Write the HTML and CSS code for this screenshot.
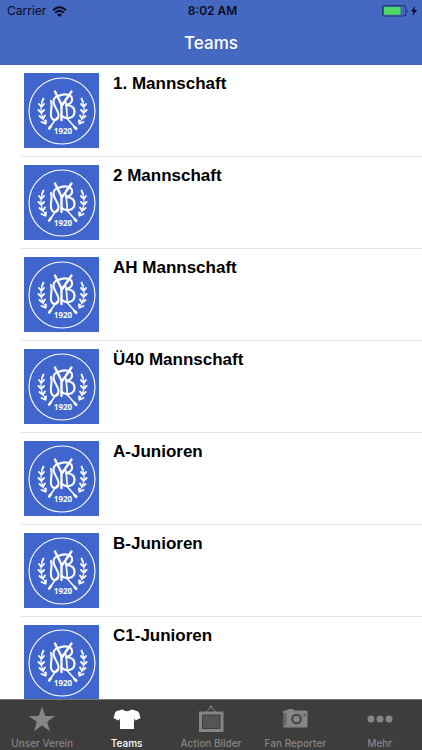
FILE: index.html
```html
<!DOCTYPE html>
<html lang="de">
<head>
<meta charset="utf-8">
<meta name="viewport" content="width=device-width, initial-scale=1">
<title>Teams</title>
<link rel="stylesheet" href="styles.css">
</head>
<body>
<div class="app">
  <header class="header">
    <div class="status">
      <div class="carrier">Carrier
        <svg width="15" height="11" viewBox="0 0 15 11" fill="none" stroke="#080b1c" aria-hidden="true">
          <path stroke-width="2" d="M1 4.200Q7.500-1.800 14 4.200M3.300 6.700Q7.500 2.800 11.700 6.700"/>
          <path fill="#080b1c" stroke="none" d="M5 8.400Q7.500 6.400 10 8.400L7.500 11Z"/>
        </svg>
      </div>
      <div class="time">8:02 AM</div>
      <div class="power">
        <svg width="36" height="12" viewBox="0 0 36 12" aria-hidden="true">
          <rect x=".7" y=".7" width="23" height="10.300" rx="2" fill="none" stroke="#25396f" stroke-width="1.200"/>
          <rect x="2" y="2" width="16.500" height="7.700" rx=".7" fill="#4cd964"/>
          <path d="M25 4q1.700 1.800 0 4z" fill="#25396f"/>
          <path d="M33 .8 29 6.400h2.500L30.500 11l4.500-6h-2.700z" fill="#080b1c"/>
        </svg>
      </div>
    </div>
    <h1 class="title">Teams</h1>
  </header>
  <main class="content">
    <ul class="teams">
      <li class="team">
        <svg class="crest" viewBox="0 0 75 75" aria-hidden="true">
          <g id="crest">
            <rect width="75" height="75" fill="#4065cd"/>
            <g fill="none" stroke="#fff" stroke-linecap="round" stroke-linejoin="round">
              <circle cx="38" cy="38" r="33" stroke-width="1.100"/>
              <path stroke-width="2.400" d="M31 18.500 37.500 31.500V47M47.500 18.500 37.500 33"/>
              <path stroke-width="1.500" d="M33 44.500 25.500 55M43 45.500 52 55.500"/>
              <path stroke-width="2.600" d="M27 53l-1.800 2.500M50.500 54l1.700 1.800"/>
              <path stroke-width="2" d="M27 28C29 33 26 38 27 43c1 5 7 5.500 7.500 0C35 37 29.500 34 29.500 28.500c0-3.500 3-5.500 7-6.200"/>
              <path stroke-width="2.100" d="M36.500 22.300c5-1.800 10.500-.8 11.500 3 .8 4-2.500 6-6 7 5-.3 9 2.200 8.500 7-.5 5.500-7.500 8-13 3.500"/>
              <path stroke-width="1.700" d="M42 29.500 43.500 46"/>
              <g id="branch">
                <path stroke-width="1.100" d="M19 26c-3.500 8-2.500 17 3 25"/>
                <path stroke-width="1.900" d="M19.500 25.500l-1.500 3.500M17 33.500l-2-2.500M17 39.500l-2.500-2.500M18.500 45.500l-3-2.500M21 50.500l-3.500-1.500M17.500 33.500l2.500-2.500M17.500 39.500l2.500-2.500M19 45.500l2-3M21.500 50.500l.5-3"/>
              </g>
              <use href="#branch" transform="translate(77 0) scale(-1 1)"/>
            </g>
            <text class="crest-year" x="39" y="61" text-anchor="middle">1920</text>
          </g>
        </svg>
        <h2 class="name">1. Mannschaft</h2>
      </li>
      <li class="team"><svg class="crest" viewBox="0 0 75 75" aria-hidden="true"><use href="#crest"/></svg><h2 class="name">2 Mannschaft</h2></li>
      <li class="team"><svg class="crest" viewBox="0 0 75 75" aria-hidden="true"><use href="#crest"/></svg><h2 class="name">AH Mannschaft</h2></li>
      <li class="team"><svg class="crest" viewBox="0 0 75 75" aria-hidden="true"><use href="#crest"/></svg><h2 class="name">Ü40 Mannschaft</h2></li>
      <li class="team"><svg class="crest" viewBox="0 0 75 75" aria-hidden="true"><use href="#crest"/></svg><h2 class="name">A-Junioren</h2></li>
      <li class="team"><svg class="crest" viewBox="0 0 75 75" aria-hidden="true"><use href="#crest"/></svg><h2 class="name">B-Junioren</h2></li>
      <li class="team"><svg class="crest" viewBox="0 0 75 75" aria-hidden="true"><use href="#crest"/></svg><h2 class="name">C1-Junioren</h2></li>
    </ul>
  </main>
  <nav class="tabs">
    <a class="tab" href="#verein">
      <svg class="tab-icon" viewBox="0 0 28 28" aria-hidden="true"><path fill="currentColor" d="M14 1.500 17.200 11H27l-7.800 5.900 2.900 9.400L14 20.500l-8.100 5.800 2.900-9.400L1 11h9.800z"/></svg>
      <span>Unser Verein</span>
    </a>
    <a class="tab active" href="#teams" aria-current="page">
      <svg class="tab-icon" viewBox="0 0 28 28" aria-hidden="true"><path fill="currentColor" d="M9.500 4.500q4.500 3.500 9 0l5.500 1.500q1.500.5 2 2l1.500 5-5 2.500-1.500-2V24H7V13.500l-1.500 2-5-2.500L2 8q.5-1.500 2-2z"/></svg>
      <span>Teams</span>
    </a>
    <a class="tab" href="#bilder">
      <svg class="tab-icon" viewBox="0 0 28 28" aria-hidden="true"><path d="M9 7l5-5 5 5" fill="none" stroke="currentColor"/><circle cx="14" cy="2" r="1.300" fill="currentColor"/><path fill="currentColor" fill-rule="evenodd" d="M2 6.500h24.500V27H2zM5 9.500V24h18.500V9.500z"/><path fill="#555" d="M6 10.500h16.500V23H6z"/></svg>
      <span>Action Bilder</span>
    </a>
    <a class="tab" href="#reporter">
      <svg class="tab-icon" viewBox="0 0 28 28" aria-hidden="true"><path fill="currentColor" d="M3 5.500h2.500L7 4h5l1.500 1.500H25q1.500 0 1.500 1.500v14q0 1.500-1.500 1.500H3.500Q2 22.500 2 21V7z"/><path fill="#666" d="M2 8h3.500v11L4 21H2z"/><circle cx="15.500" cy="14" r="4.300" fill="#858585" stroke="#434343" stroke-width="2"/><circle cx="23.500" cy="10" r="1" fill="#4a4a4a"/></svg>
      <span>Fan Reporter</span>
    </a>
    <a class="tab" href="#mehr">
      <svg class="tab-icon" viewBox="0 0 28 28" aria-hidden="true"><g fill="currentColor"><circle cx="5" cy="14" r="3.500"/><circle cx="14" cy="14" r="3.500"/><circle cx="23" cy="14" r="3.500"/></g></svg>
      <span>Mehr</span>
    </a>
  </nav>
</div>
</body>
</html>
```

FILE: styles.css
```css
* {
  box-sizing: border-box;
}

body {
  margin: 0;
  background: #fff;
  font-family: Inter, "Liberation Sans", sans-serif;
}

.app {
  display: flex;
  flex-direction: column;
  height: 100vh;
}

.header {
  flex: none;
  background: #4568c0;
  border-bottom: 1px solid #4063b8;
}

.status {
  display: grid;
  grid-template-columns: 1fr auto 1fr;
  align-items: center;
  height: 22px;
  padding: 0 4px 0 7px;
  color: #080b1c;
  font-size: 12px;
  line-height: 22px;
}

.carrier {
  display: flex;
  align-items: center;
  gap: 6px;
}

.time {
  font-weight: 600;
}

.power {
  display: flex;
  justify-content: flex-end;
}

.title {
  margin: 0;
  color: #fff;
  font-size: 17px;
  font-weight: 500;
  line-height: 42px;
  text-align: center;
}

.content {
  flex: 1;
  min-height: 0;
  overflow: hidden;
}

.teams {
  margin: 0;
  padding: 0 0 0 21px;
  list-style: none;
}

.team {
  display: flex;
  gap: 14px;
  height: 92px;
  padding: 8px 3px;
  border-bottom: 1px solid #e8e8e8;
}

.crest {
  flex: none;
  width: 75px;
  height: 75px;
}

.crest-year {
  fill: #fff;
  font: 700 8px "Open Sans", sans-serif;
}

.name {
  margin: 0;
  color: #000;
  font-family: "Liberation Sans", Arial, sans-serif;
  font-size: 17px;
  font-weight: 700;
  line-height: 22px;
}

.tabs {
  flex: none;
  display: grid;
  grid-template-columns: repeat(5, 1fr);
  height: 51px;
  background: #3d3d3d;
  border-top: 1px solid #777;
}

.tab {
  display: flex;
  flex-direction: column;
  align-items: center;
  padding-top: 5px;
  color: #858585;
  font-size: 10px;
  font-weight: 500;
  line-height: 14px;
  text-decoration: none;
  white-space: nowrap;
}

.tab-icon {
  width: 28px;
  height: 28px;
  margin-bottom: 3px;
}

.active {
  color: #fff;
}
```
